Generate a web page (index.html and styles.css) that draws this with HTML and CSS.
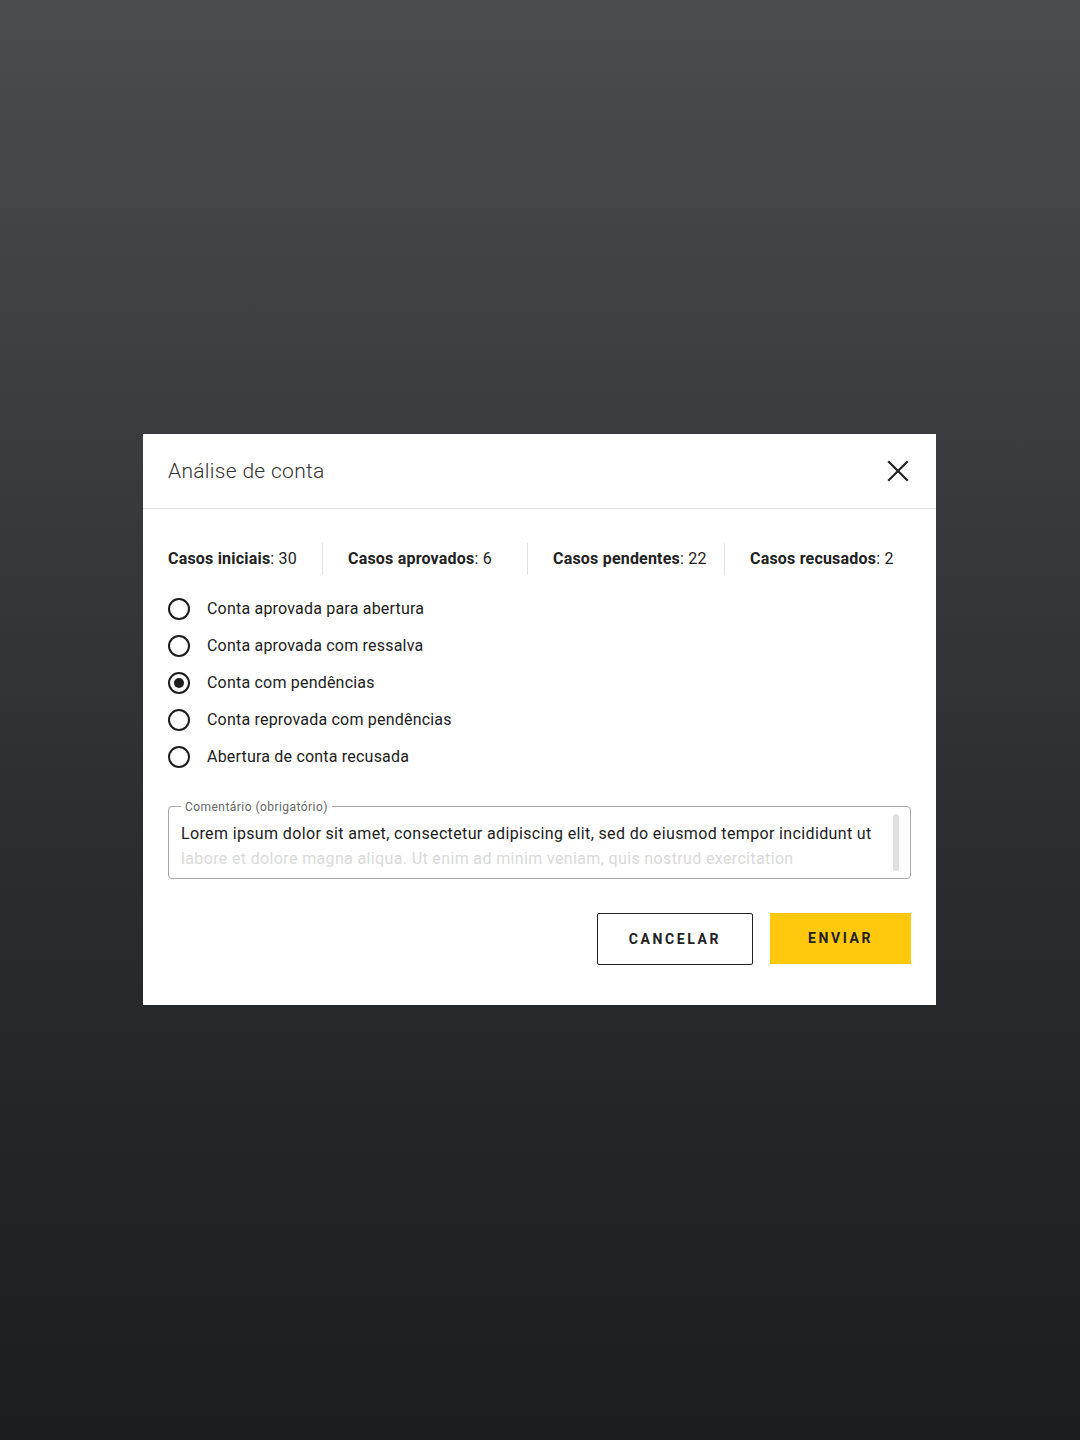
FILE: index.html
```html
<!DOCTYPE html>
<html lang="pt-BR">
<head>
  <meta charset="UTF-8">
  <meta name="viewport" content="width=device-width, initial-scale=1.0">
  <title>Análise de conta</title>
  <link rel="stylesheet" href="styles.css">
</head>
<body>
  <div class="overlay">
    <div class="modal" role="dialog" aria-labelledby="modal-titulo">
      <header class="modal-header">
        <h1 id="modal-titulo" class="modal-titulo">Análise de conta</h1>
        <button class="fechar" aria-label="Fechar">
          <svg viewBox="0 0 24 24"><path d="M3 3l18 18M21 3L3 21" stroke="currentColor" stroke-width="2.2" stroke-linecap="square"/></svg>
        </button>
      </header>

      <div class="modal-corpo">
        <div class="resumo">
          <div class="resumo-item"><strong>Casos iniciais</strong>: 30</div>
          <div class="resumo-item"><strong>Casos aprovados</strong>: 6</div>
          <div class="resumo-item"><strong>Casos pendentes</strong>: 22</div>
          <div class="resumo-item"><strong>Casos recusados</strong>: 2</div>
        </div>

        <div class="opcoes">
          <label class="opcao"><input type="radio" name="parecer"><span class="radio"></span>Conta aprovada para abertura</label>
          <label class="opcao"><input type="radio" name="parecer"><span class="radio"></span>Conta aprovada com ressalva</label>
          <label class="opcao"><input type="radio" name="parecer" checked><span class="radio"></span>Conta com pendências</label>
          <label class="opcao"><input type="radio" name="parecer"><span class="radio"></span>Conta reprovada com pendências</label>
          <label class="opcao"><input type="radio" name="parecer"><span class="radio"></span>Abertura de conta recusada</label>
        </div>

        <fieldset class="comentario">
          <legend>Comentário (obrigatório)</legend>
          <div class="comentario-texto">
            <p>Lorem ipsum dolor sit amet, consectetur adipiscing elit, sed do eiusmod tempor incididunt ut</p>
            <p class="esmaecido">labore et dolore magna aliqua. Ut enim ad minim veniam, quis nostrud exercitation</p>
          </div>
          <span class="rolagem"></span>
        </fieldset>

        <div class="acoes">
          <button class="btn btn-secundario">Cancelar</button>
          <button class="btn btn-primario">Enviar</button>
        </div>
      </div>
    </div>
  </div>
</body>
</html>
```

FILE: styles.css
```css
:root {
  --texto: #212121;
  --texto-suave: #666;
  --borda: #e2e2e2;
  --borda-campo: #a8a8a8;
  --amarelo: #fec80c;
  --branco: #fff;
}
* { box-sizing: border-box; margin: 0; padding: 0; }
body {
  font-family: Roboto, 'Noto Sans', Arial, sans-serif;
  color: var(--texto);
  min-height: 100vh;
  background: linear-gradient(180deg, #4a4d50 0%, #3a3c3f 30%, #2b2c2f 60%, #1c1d1f 100%);
}
.overlay {
  min-height: 1440px;
  display: flex;
  align-items: center;
  justify-content: center;
  padding: 0 1px 2px 0;
}
.modal {
  width: 793px;
  background: var(--branco);
}
.modal-header {
  height: 75px;
  display: flex;
  align-items: center;
  justify-content: space-between;
  padding: 0 26px 0 25px;
  border-bottom: 1px solid var(--borda);
}
.modal-titulo {
  font-size: 21px;
  font-weight: 300;
  color: #333;
  letter-spacing: 0.3px;
}
.fechar {
  width: 24px; height: 24px;
  border: none;
  background: none;
  color: #222;
  cursor: pointer;
}
.fechar svg { width: 24px; height: 24px; display: block; }
.modal-corpo {
  padding: 34px 25px 40px 25px;
}
.resumo {
  display: grid;
  grid-template-columns: 154px 205px 197px 1fr;
  align-items: center;
  font-size: 16px;
  letter-spacing: 0.2px;
}
.resumo-item {
  height: 32px;
  display: flex;
  align-items: center;
  white-space: nowrap;
}
.resumo-item + .resumo-item {
  border-left: 1px solid var(--borda);
  padding-left: 25px;
}
.resumo-item strong { font-weight: 700; }
.opcoes {
  display: flex;
  flex-direction: column;
  gap: 13px;
  margin-top: 22px;
}
.opcao {
  display: flex;
  align-items: center;
  height: 24px;
  font-size: 16px;
  letter-spacing: 0.2px;
  cursor: pointer;
}
.opcao input { display: none; }
.radio {
  width: 22px; height: 22px;
  border: 2px solid #1d1d1d;
  border-radius: 50%;
  margin-right: 17px;
  display: flex;
  align-items: center;
  justify-content: center;
}
.opcao input:checked + .radio::after {
  content: '';
  width: 10px; height: 10px;
  border-radius: 50%;
  background: #1d1d1d;
}
.comentario {
  position: relative;
  margin-top: 31px;
  border: 1px solid var(--borda-campo);
  border-radius: 4px;
  padding: 0 38px 0 12px;
  height: 79px;
}
.comentario legend {
  font-size: 12px;
  color: var(--texto-suave);
  padding: 0 4px;
  letter-spacing: 0.45px;
}
.comentario-texto {
  font-size: 16px;
  line-height: 25px;
  letter-spacing: 0.36px;
  height: 57px;
  overflow: hidden;
  margin-top: 7px;
}
.comentario-texto p { white-space: nowrap; }
.esmaecido { color: #dadada; }
/* barra de rolagem desenhada à mão */
.rolagem {
  position: absolute;
  right: 11px;
  top: 0;
  width: 6px;
  height: 57px;
  border-radius: 3px;
  background: #e0e0e0;
}
.acoes {
  display: flex;
  justify-content: flex-end;
  gap: 17px;
  margin-top: 34px;
}
.btn {
  height: 52px;
  font-family: inherit;
  font-size: 14px;
  font-weight: 700;
  letter-spacing: 2.6px;
  text-transform: uppercase;
  color: var(--texto);
  cursor: pointer;
}
.btn-secundario {
  width: 156px;
  background: var(--branco);
  border: 1px solid #222;
  border-radius: 2px;
}
.btn-primario {
  width: 141px;
  height: 51px;
  background: var(--amarelo);
  border: none;
}
```
